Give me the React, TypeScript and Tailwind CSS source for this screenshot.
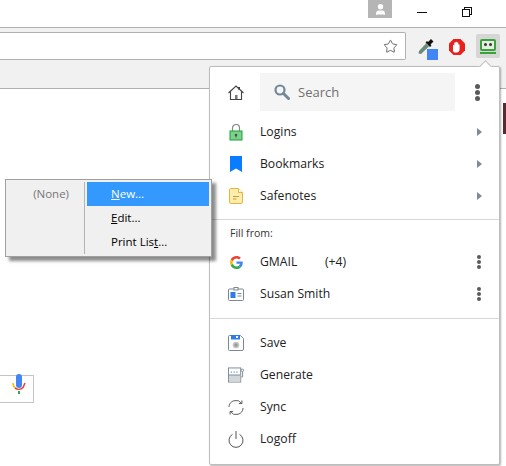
import { User, Star } from 'lucide-react'

const font = "font-['Open_Sans','Noto_Sans',sans-serif]"

function Kebab({ big }: { big?: boolean }) {
  const dot = big ? 'w-[5px] h-[5px]' : 'w-1 h-1'
  return (
    <div className="flex flex-col gap-[1px]">
      <span className={`${dot} rounded-full bg-[#5a5a5a]`} />
      <span className={`${dot} rounded-full bg-[#5a5a5a]`} />
      <span className={`${dot} rounded-full bg-[#5a5a5a]`} />
    </div>
  )
}

function Arrow() {
  return <span className="w-0 h-0 border-y-4 border-y-transparent border-l-[5px] border-l-[#7d8a99]" />
}

function HomeIcon() {
  return (
    <svg width="16" height="15" viewBox="0 0 16 15" fill="none" stroke="#444" strokeWidth="1.100">
      <path d="M.5 8 8 1l7.500 7M2.500 6.500v8h11v-8" />
      <path d="M11 2v2.500" strokeWidth="2" />
      <rect x="7" y="10" width="2.500" height="4" fill="#777" stroke="none" />
    </svg>
  )
}

function SearchIcon() {
  return (
    <svg width="16" height="16" viewBox="0 0 16 16" fill="none" stroke="#74879a">
      <circle cx="6" cy="6" r="4.500" strokeWidth="2.200" />
      <path d="M9.500 9.500 14.500 14.500" strokeWidth="3" strokeLinecap="round" />
    </svg>
  )
}

function LockIcon() {
  return (
    <svg width="14" height="17" viewBox="0 0 14 17">
      <path d="M3.500 7V4a3.500 3.500 0 0 1 7 0v3" fill="none" stroke="#8a8a8a" strokeWidth="1.200" />
      <rect x="1" y="7" width="12" height="9" fill="#7fd08a" stroke="#16a33a" strokeWidth="1" />
      <circle cx="7" cy="11" r="1.300" fill="#3d5a44" />
      <rect x="6.500" y="11" width="1" height="2.500" fill="#3d5a44" />
    </svg>
  )
}

function BookmarkIcon() {
  return (
    <svg width="12" height="16" viewBox="0 0 12 16">
      <path d="M0 0h12v16L6 12.500 0 16z" fill="#0a7cff" />
    </svg>
  )
}

function NoteIcon() {
  return (
    <svg width="14" height="16" viewBox="0 0 14 16">
      <path d="M1.500.500h8l4 4v9.500a1.500 1.500 0 0 1-1.500 1.500H2A1.500 1.500 0 0 1 .500 14V2A1.500 1.500 0 0 1 1.500.500z" fill="#fdeeb0" stroke="#e9b43a" />
      <path d="M9.500.500v4h4" fill="#fff" stroke="#e9b43a" />
      <path d="M4 8.500h6M4 11h3.500" stroke="#c99a2e" />
    </svg>
  )
}

function GoogleIcon() {
  return (
    <svg width="13" height="13" viewBox="0 0 48 48">
      <path fill="#EA4335" d="M24 9.500c3.500 0 6.700 1.200 9.200 3.600l6.900-6.900C35.900 2.400 30.500 0 24 0 14.600 0 6.500 5.400 2.600 13.200l8 6.200C12.500 13.700 17.800 9.500 24 9.500z" />
      <path fill="#4285F4" d="M47 24.500c0-1.600-.1-3.100-.4-4.500H24v9h12.900c-.6 3-2.200 5.500-4.700 7.200l7.700 6c4.500-4.200 7.100-10.300 7.100-17.700z" />
      <path fill="#FBBC05" d="M10.600 28.600A14.400 14.400 0 0 1 9.800 24c0-1.600.3-3.200.8-4.600l-8-6.200A24 24 0 0 0 0 24c0 3.900.9 7.500 2.600 10.800z" />
      <path fill="#34A853" d="M24 48c6.500 0 11.900-2.100 15.900-5.800l-7.700-6c-2.200 1.400-4.900 2.300-8.200 2.300-6.200 0-11.500-4.200-13.400-9.900l-8 6.200C6.500 42.600 14.600 48 24 48z" />
    </svg>
  )
}

function CardIcon() {
  return (
    <svg width="16" height="14" viewBox="0 0 16 14">
      <rect x=".5" y="2" width="15" height="11.500" rx="1" fill="#fff" stroke="#7a8796" />
      <rect x="6" y=".5" width="4" height="2.500" fill="#fff" stroke="#7a8796" />
      <rect x="2.500" y="5" width="5" height="6" fill="#2f7bea" />
      <path d="M9.500 6.500h4M9.500 9h4" stroke="#7a8796" />
    </svg>
  )
}

function SaveIcon() {
  return (
    <svg width="16" height="16" viewBox="0 0 16 16">
      <path d="M1.500.500h11l3 3v10.500a1.500 1.500 0 0 1-1.500 1.500H1.500A1 1 0 0 1 .500 14.500V1.500a1 1 0 0 1 1-1z" fill="#fff" stroke="#7a8796" />
      <rect x="3" y="0" width="9" height="4.500" fill="#2f7bea" />
      <rect x="8" y="1" width="2" height="2" fill="#fff" />
      <circle cx="8" cy="10" r="2.600" fill="#9a9a9a" stroke="#c7c7c7" strokeWidth="1.500" />
    </svg>
  )
}

function GenerateIcon() {
  return (
    <svg width="17" height="16" viewBox="0 0 17 16">
      <rect x=".5" y=".5" width="13" height="15" fill="#fff" stroke="#7a8796" />
      <rect x="1" y="8" width="12" height="7" fill="#d3d7dc" />
      <path d="M3 5h1M6 5h1M9 5h1" stroke="#2f7bea" strokeWidth="1.400" />
      <path d="M1 8h12" stroke="#7a8796" />
      <path d="M14 10h1.500V4.500" fill="none" stroke="#7a8796" />
      <circle cx="15.300" cy="3" r="1.300" fill="#fff" stroke="#7a8796" />
    </svg>
  )
}

function SyncIcon() {
  return (
    <svg width="17" height="17" viewBox="0 0 17 17" fill="none" stroke="#555" strokeWidth="1">
      <path d="M1 8A7.500 7.500 0 0 1 14.500 4" />
      <path d="M14.800 1v3.300h-3.300" />
      <path d="M16 9A7.500 7.500 0 0 1 2.500 13" />
      <path d="M2.200 16v-3.300h3.300" />
    </svg>
  )
}

function PowerIcon() {
  return (
    <svg width="16" height="17" viewBox="0 0 16 17" fill="none" stroke="#555" strokeWidth="1">
      <path d="M4.500 3.300a7 7 0 1 0 7 0" />
      <path d="M8 0v8" />
    </svg>
  )
}

function MenuRow({ icon, label, extra, right }: { icon: React.ReactNode; label: string; extra?: string; right?: React.ReactNode }) {
  return (
    <div className="flex items-center h-8 text-[#222] text-[12.200px]">
      <div className="w-[50px] pl-[18px] flex items-center">
        <div className="w-4 flex justify-center">{icon}</div>
      </div>
      <span className="w-[65px] whitespace-nowrap">{label}</span>
      {extra && <span>{extra}</span>}
      <div className="ml-auto w-[40px] flex justify-center">{right}</div>
    </div>
  )
}

export default function App() {
  return (
    <div className={`relative w-[506px] h-[466px] overflow-hidden bg-white ${font}`}>
      {/* title bar */}
      <div className="h-[28px] border-b border-[#b0b0b0] flex items-start">
        <div className="ml-[368px] w-6 h-[18px] bg-[#b5b5b5] flex items-center justify-center">
          <User size={13} fill="#fff" stroke="#fff" />
        </div>
        <div className="ml-[25px] mt-[12px] w-[10px] h-px bg-[#111]" />
        <div className="ml-[35px] mt-[7px] relative w-[10px] h-[10px]">
          <div className="absolute right-0 top-0 w-2 h-2 border border-[#111]" />
          <div className="absolute left-0 bottom-0 w-2 h-2 border border-[#111] bg-white" />
        </div>
      </div>
      {/* toolbar */}
      <div className="h-[61px] bg-[#f1f1f1] border-b border-[#b0b0b0] flex items-start pt-[4px]">
        <div className="w-[406px] h-[28px] bg-white border-y border-r border-[#b0b0b0] rounded-r-[2px] flex items-center justify-end pr-[7px] shrink-0">
          <Star size={15} strokeWidth={1.400} color="#555" />
        </div>
        <div className="ml-[12px] mt-[6px] relative w-[20px] h-[22px]">
          <svg width="16" height="17" viewBox="0 0 16 17" className="absolute left-0 top-0">
            <path d="M.5 15.500 1 13 8 5.500l3 3L3 16z" fill="#6b8b78" />
            <path d="M7.500 4.500l4.500 4.500 1.500-1.500-1-1 3-3-2.500-2.500-3 3-1-1z" fill="#111" />
          </svg>
          <div className="absolute left-[9px] top-[11px] w-[11px] h-[11px] bg-[#4285f4]" />
        </div>
        <svg width="18" height="18" viewBox="0 0 18 18" className="ml-[10px] mt-[6px]">
          <path d="M5.500 1h7L17 5.500v7L12.500 17h-7L1 12.500v-7z" fill="#e8211c" />
          <path d="M5 13V7.500c0-1 1.300-1 1.300 0V5c0-1 1.300-1 1.300 0v-.6c0-1 1.400-1 1.400 0V5c0-1 1.300-1 1.300 0v2c0-1 1.300-1 1.300 0v4c0 2-1 3.500-3 3.500H7c-1 0-1.500-.6-2-1.500z" fill="#fff" />
        </svg>
        <div className="ml-[10px] mt-[2px] w-6 h-6 bg-[#d6d6d6] rounded-[2px] flex flex-col items-center justify-center gap-[1px]">
          <div className="w-4 h-[12px] border-2 border-[#3ca33c] rounded-[2px] flex items-center justify-center gap-[2px] bg-[#e2efe2]">
            <span className="w-[3px] h-[3px] rounded-full bg-[#333]" />
            <span className="w-[3px] h-[3px] rounded-full bg-[#333]" />
          </div>
          <div className="w-4 h-[2px] bg-[#3ca33c]" />
        </div>
      </div>

      {/* voice search box, cut by the left edge */}
      <div className="mt-[286px] w-[34px] h-[28px] border-y border-r border-[#c4c4c4] flex items-start pl-[12px]">
        <svg width="14" height="20" viewBox="0 0 14 20" className="-mt-[2px] overflow-visible">
          <rect x="4" y="0" width="6" height="14" rx="3" fill="#4285f4" />
          <path d="M1 9a6 6 0 0 0 2 5" fill="none" stroke="#fbbc05" strokeWidth="1.600" />
          <path d="M3 14a6 6 0 0 0 8-0.500L13 9" fill="none" stroke="#ea4335" strokeWidth="1.600" />
          <rect x="6" y="17" width="2" height="3" fill="#34a853" />
        </svg>
      </div>

      {/* sliver of page picture at the right edge */}
      <div className="absolute right-0 top-[103px] w-[3px] h-[31px] bg-[#5a2a2e]" />

      {/* extension popup */}
      <div className="absolute left-[209px] top-[66px] w-[291px] h-[399px] bg-white border border-[#bdbdbd] rounded-[2px] shadow-[1px_1px_2px_rgba(0,0,0,0.3)]">
        <div className="absolute -top-[5px] right-[9px] w-[9px] h-[9px] rotate-45 bg-white border-l border-t border-[#bdbdbd]" />
        <div className="flex items-center h-[49px] pt-[2px] pb-[1px]">
          <div className="w-[50px] pl-[18px] flex"><HomeIcon /></div>
          <div className="w-[195px] h-[38px] bg-[#f5f5f5] flex items-center pl-[14px] gap-[8px] text-[#6f6f6f] text-[13px]">
            <SearchIcon />
            <span className="mt-[1px]">Search</span>
          </div>
          <div className="ml-[20px]"><Kebab big /></div>
        </div>
        <MenuRow icon={<LockIcon />} label="Logins" right={<Arrow />} />
        <MenuRow icon={<BookmarkIcon />} label="Bookmarks" right={<Arrow />} />
        <MenuRow icon={<NoteIcon />} label="Safenotes" right={<Arrow />} />
        <div className="mt-[7px] h-px bg-[#d8d8d8]" />
        <div className="h-[26px] flex items-center pl-[20px] pt-[1px] text-[10.500px] text-[#333]">Fill from:</div>
        <MenuRow icon={<GoogleIcon />} label="GMAIL" extra="(+4)" right={<Kebab />} />
        <MenuRow icon={<CardIcon />} label="Susan Smith" right={<Kebab />} />
        <div className="mt-[8px] h-px bg-[#d8d8d8]" />
        <div className="pt-[8px]">
          <MenuRow icon={<SaveIcon />} label="Save" />
          <MenuRow icon={<GenerateIcon />} label="Generate" />
          <MenuRow icon={<SyncIcon />} label="Sync" />
          <MenuRow icon={<PowerIcon />} label="Logoff" />
        </div>
      </div>

      {/* native context menu */}
      <div className="absolute left-[5px] top-[179px] w-[207px] h-[78px] bg-[#f0f0f0] border border-[#a0a0a0] shadow-[4px_4px_3px_rgba(0,0,0,0.45)] flex text-[11.500px] text-black">
        <div className="w-[79px] pt-[3px] pr-[15px] text-right text-[#777] border-r border-[#b5b5b5] my-[2px] shrink-0">(None)</div>
        <div className="flex-1 pl-[2px] pt-[2px] pr-[2px] flex flex-col">
          <div className="h-[24px] bg-[#3399ff] text-white pl-[24px] flex items-center"><span><u>N</u>ew...</span></div>
          <div className="h-[24px] pl-[24px] flex items-center"><span><u>E</u>dit...</span></div>
          <div className="h-[24px] pl-[24px] flex items-center"><span>Print Lis<u>t</u>...</span></div>
        </div>
      </div>
    </div>
  )
}
